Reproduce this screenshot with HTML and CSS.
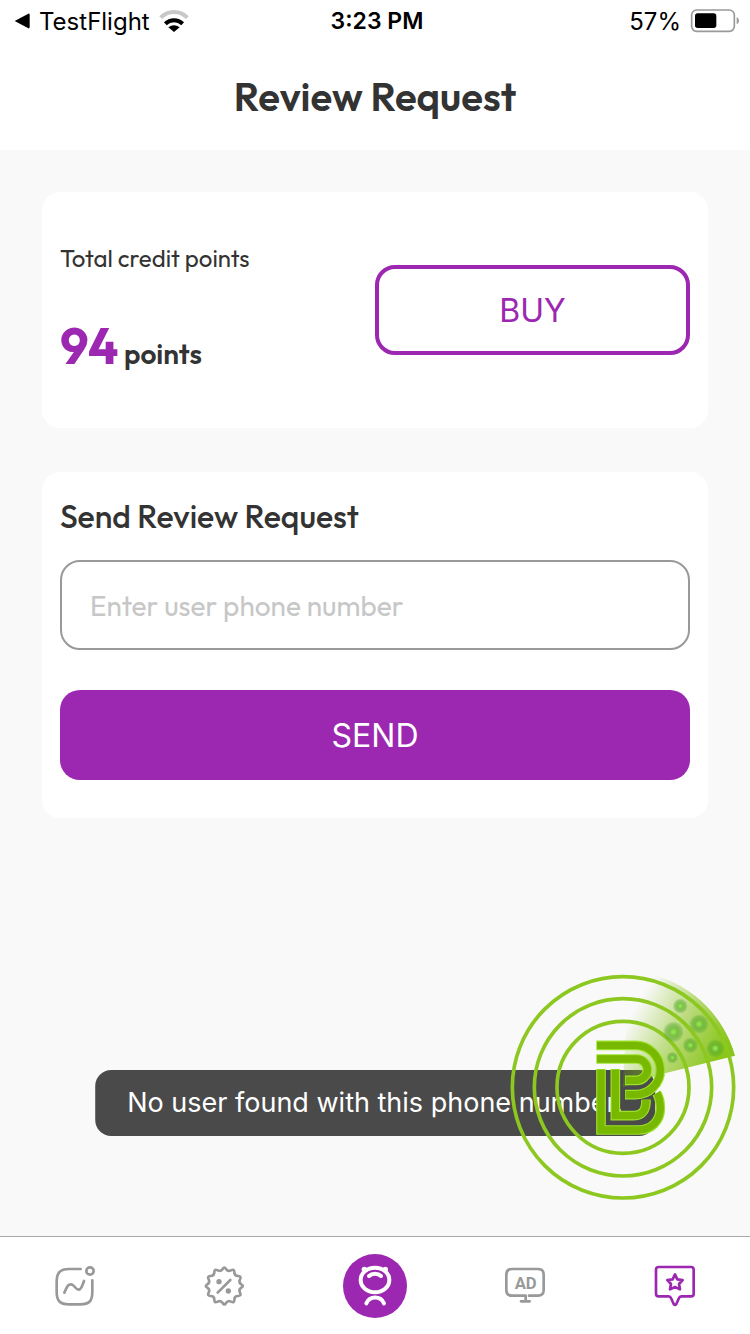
FILE: index.html
```html
<!DOCTYPE html>
<html lang="en">
<head>
    <meta charset="UTF-8">
    <meta name="viewport" content="width=device-width, initial-scale=1.0">
    <title>Review Request</title>
    <link rel="stylesheet" href="styles.css">
</head>
<body>
    <div class="status-bar">
        <div class="status-left">
            <svg class="back-arrow" viewBox="0 0 48 48"><path d="M2 24 L43 2 Q47 1 47 6 V42 Q47 47 43 46 Z" fill="#000"/></svg>
            <span>TestFlight</span>
            <svg class="wifi" viewBox="475 24 90 72" fill="none">
                <path d="M480 50 C502 27 538 27 560 50" stroke="#c8c8c8" stroke-width="12"/>
                <path d="M494 68 C509 54 531 54 546 68" stroke="#000" stroke-width="12"/>
                <path d="M503 79 Q520 67 537 79 L520 93 Z" fill="#000"/>
            </svg>
        </div>
        <div class="status-time">3:23 PM</div>
        <div class="status-right">
            <span>57%</span>
            <svg class="battery" viewBox="270 20 150 78">
                <rect x="275" y="26" width="128" height="64" rx="15" fill="none" stroke="#999" stroke-width="5"/>
                <rect x="285" y="36" width="64" height="44" rx="8" fill="#000"/>
                <path d="M410 47 Q417 50 417 58 Q417 66 410 69 Z" fill="#999"/>
            </svg>
        </div>
    </div>

    <header class="page-header">
        <h1>Review Request</h1>
    </header>

    <main class="content">
        <section class="card credit-card">
            <div class="credit-info">
                <p class="credit-label">Total credit points</p>
                <p class="credit-points"><strong>94</strong> points</p>
            </div>
            <button class="btn btn-outline" type="button">BUY</button>
        </section>

        <form class="card request-card">
            <label class="request-title" for="phone">Send Review Request</label>
            <input class="phone-input" id="phone" type="tel" placeholder="Enter user phone number">
            <button class="btn btn-solid" type="button">SEND</button>
        </form>
    </main>

    <div class="toast" role="status">No user found with this phone number.</div>

    <!-- Floating radar button -->
    <svg class="radar" viewBox="27 27 681 681" fill="none">
        <defs>
            <linearGradient id="sweep" gradientUnits="userSpaceOnUse" x1="395" y1="150" x2="650" y2="290">
                <stop offset="0" stop-color="#7cbc00" stop-opacity="0"/>
                <stop offset="0.5" stop-color="#7cbc00" stop-opacity="0.5"/>
                <stop offset="1" stop-color="#7cc000" stop-opacity="0.9"/>
            </linearGradient>
            <radialGradient id="blip">
                <stop offset="0" stop-color="#9ae850"/>
                <stop offset="0.22" stop-color="#86d648"/>
                <stop offset="0.45" stop-color="#55a82c" stop-opacity="0.6"/>
                <stop offset="0.75" stop-color="#55a82c" stop-opacity="0.45"/>
                <stop offset="1" stop-color="#55a82c" stop-opacity="0"/>
            </radialGradient>
        </defs>
        <path d="M369 367 L385 18 A349 349 0 0 1 705 272 L495 325 Z" fill="url(#sweep)"/>
        <g stroke="#8cc820" stroke-width="11">
            <circle cx="369" cy="367" r="332"/>
            <circle cx="369" cy="367" r="266"/>
            <circle cx="369" cy="367" r="198"/>
        </g>
        <g fill="url(#blip)">
            <circle cx="541" cy="123" r="23"/>
            <circle cx="597" cy="177" r="30"/>
            <circle cx="520" cy="201" r="32"/>
            <circle cx="571" cy="241" r="24"/>
            <circle cx="646" cy="250" r="28"/>
            <circle cx="517" cy="278" r="18"/>
        </g>
        <g stroke="#9be32a" stroke-width="29">
            <path d="M303 312 V495 H415 C455 495 481 467 481 430 C481 410 478 397 470 384"/>
            <path d="M346 312 V452 H402 C426 452 439 436 438 404"/>
            <path d="M289 241 H407 A74 74 0 0 1 407 389 H375"/>
            <path d="M289 282 H410 A32 32 0 0 1 410 346 H375"/>
        </g>
        <g stroke="#78b800" stroke-width="22">
            <path d="M303 314 V495 H415 C455 495 481 467 481 430 C481 410 478 397 470 384"/>
            <path d="M346 314 V452 H402 C426 452 439 436 438 404"/>
            <path d="M291 241 H407 A74 74 0 0 1 407 389 H377"/>
            <path d="M291 282 H410 A32 32 0 0 1 410 346 H377"/>
        </g>
    </svg>

    <nav class="tab-bar">
        <a class="tab" href="#" aria-label="Dashboard">
            <svg viewBox="39 42 192 192">
                <path d="M152 87 H117 C90 87 80 98 80 125 V155 C80 183 90 193 117 193 H151 C178 193 187 183 187 155 V121"/>
                <circle cx="180" cy="93" r="11"/>
                <path d="M103 158 C112 138 114 133 123 133 C133 133 136 149 146 149 C154 149 157 136 162 123"/>
            </svg>
        </a>
        <a class="tab" href="#" aria-label="Offers">
            <svg viewBox="-94 -96 192 192">
                <path d="M-5 -51 Q0 -60 5 -51 Q11 -42 20 -47 Q30 -52 30 -41 Q30 -30 41 -30 Q52 -30 47 -20 Q42 -11 51 -5 Q60 0 51 5 Q42 11 47 20 Q52 30 41 30 Q30 30 30 41 Q30 52 20 47 Q11 42 5 51 Q0 60 -5 51 Q-11 42 -20 47 Q-30 52 -30 41 Q-30 30 -41 30 Q-52 30 -47 20 Q-42 11 -51 5 Q-60 0 -51 -5 Q-42 -11 -47 -20 Q-52 -30 -41 -30 Q-30 -30 -30 -41 Q-30 -52 -20 -47 Q-11 -42 -5 -51 Z"/>
                <path d="M-20 20 L18 -18"/>
                <circle class="dot" cx="-16" cy="-13" r="8"/>
                <circle class="dot" cx="12" cy="15" r="8"/>
            </svg>
        </a>
        <a class="tab tab-home" href="#" aria-label="Home">
            <svg viewBox="69 42 192 192">
                <circle class="disc" cx="165" cy="138" r="96"/>
                <ellipse cx="165" cy="120" rx="43" ry="37"/>
                <circle class="dot" cx="133" cy="88" r="8"/>
                <circle class="dot" cx="196" cy="88" r="8"/>
                <path d="M147 108 C156 99 174 99 183 108"/>
                <path d="M139 190 C149 167 182 167 192 190"/>
            </svg>
        </a>
        <a class="tab" href="#" aria-label="Ads">
            <svg viewBox="9 42 192 192">
                <path d="M107 184 V167 H66 Q49 167 49 150 V104 Q49 87 66 87 H144 Q161 87 161 104 V150 Q161 167 144 167 H117 M93 184 H119"/>
                <text class="ad-text" x="107" y="147" text-anchor="middle">AD</text>
            </svg>
        </a>
        <a class="tab tab-active" href="#" aria-label="Reviews">
            <svg viewBox="459 42 192 192">
                <path d="M506 81 H603 Q611 81 611 89 V161 Q611 169 603 169 H574 Q569 169 567 174 L559 192 Q555 198 551 192 L543 174 Q541 169 536 169 H506 Q498 169 498 161 V89 Q498 81 506 81 Z"/>
                <path d="M555 103 L562 118 L578 120 L567 132 L570 148 L555 141 L540 148 L543 132 L532 120 L548 118 Z"/>
            </svg>
        </a>
    </nav>
</body>
</html>
```
FILE: styles.css
```css
* {
    box-sizing: border-box;
}

body {
    margin: 0;
    min-height: 100vh;
    display: flex;
    flex-direction: column;
    position: relative;
    background-color: #f9f9f9;
    color: #333;
    font-family: Outfit, Lato, sans-serif;
}

h1, p {
    margin: 0;
}

.status-bar {
    display: grid;
    grid-template-columns: 1fr auto 1fr;
    align-items: center;
    height: 42px;
    padding: 0 10px 0 14px;
    background-color: #fff;
    color: #000;
    font-family: Inter, sans-serif;
    font-size: 24px;
}

.status-left,
.status-right {
    display: flex;
    align-items: center;
    gap: 9px;
}

.status-right {
    justify-content: flex-end;
}

.status-time {
    font-size: 23px;
    font-weight: 600;
}

.back-arrow {
    width: 16px;
    height: 16px;
}

.wifi {
    width: 30px;
    height: 24px;
}

.battery {
    width: 50px;
    height: 26px;
}

.page-header {
    height: 108px;
    background-color: #fff;
    text-align: center;
}

.page-header h1 {
    padding-top: 30px;
    font-size: 40px;
    line-height: 48px;
    font-weight: 600;
}

.content {
    flex: 1;
    display: flex;
    flex-direction: column;
    gap: 44px;
    padding: 42px;
}

.card {
    padding: 18px;
    border-radius: 18px;
    background-color: #fff;
}

.credit-card {
    display: grid;
    grid-template-columns: 1fr 1fr;
    align-items: center;
    min-height: 236px;
}

.credit-info {
    display: flex;
    flex-direction: column;
    gap: 42px;
    padding-top: 6px;
}

.credit-label {
    font-size: 24px;
    line-height: 32px;
}

.credit-points {
    font-size: 28px;
    line-height: 60px;
    font-weight: 600;
}

.credit-points strong {
    color: #9c27b0;
    font-size: 50px;
    font-weight: 700;
}

.btn {
    height: 90px;
    padding: 0;
    border-radius: 20px;
    font-family: Inter, sans-serif;
    font-size: 32px;
    cursor: pointer;
}

.btn-outline {
    border: 4px solid #9c27b0;
    background-color: #fff;
    color: #9c27b0;
}

.btn-solid {
    border: none;
    background-color: #9c27b0;
    color: #fff;
}

.request-card {
    display: flex;
    flex-direction: column;
    padding-top: 24px;
    padding-bottom: 38px;
}

.request-title {
    margin-bottom: 24px;
    font-size: 32px;
    line-height: 40px;
    font-weight: 500;
}

.phone-input {
    width: 100%;
    height: 90px;
    margin-bottom: 40px;
    padding: 0 28px;
    border: 2px solid #999;
    border-radius: 20px;
    background-color: #fff;
    color: #333;
    font-family: inherit;
    font-size: 28px;
}

.phone-input::placeholder {
    color: #c7c7c7;
}

.toast {
    position: absolute;
    left: 50%;
    bottom: 198px;
    transform: translateX(-50%);
    padding: 16px 32px;
    border-radius: 16px;
    background-color: #4a4a4a;
    color: #fff;
    font-family: Inter, sans-serif;
    font-size: 27px;
    line-height: 34px;
    white-space: nowrap;
}

.radar {
    position: absolute;
    right: 14px;
    bottom: 133px;
    width: 227px;
    height: 227px;
    overflow: visible;
}

.tab-bar {
    display: grid;
    grid-template-columns: repeat(5, 1fr);
    height: 98px;
    border-top: 1px solid #aaa;
    background-color: #fff;
}

.tab {
    display: flex;
    align-items: center;
    justify-content: center;
    color: #999;
}

.tab svg {
    width: 64px;
    height: 64px;
    fill: none;
    stroke: currentColor;
    stroke-width: 8;
    stroke-linecap: round;
    stroke-linejoin: round;
}

.tab svg .dot {
    fill: currentColor;
    stroke: none;
}

.tab svg .ad-text {
    fill: currentColor;
    stroke: none;
    font-family: Roboto, sans-serif;
    font-size: 50px;
    font-weight: 700;
}

.tab-home {
    color: #fff;
}

.tab-home svg {
    stroke-width: 12;
}

.tab-home svg .disc {
    fill: #9c27b0;
    stroke: none;
}

.tab-active {
    color: #9c27b0;
}
```
